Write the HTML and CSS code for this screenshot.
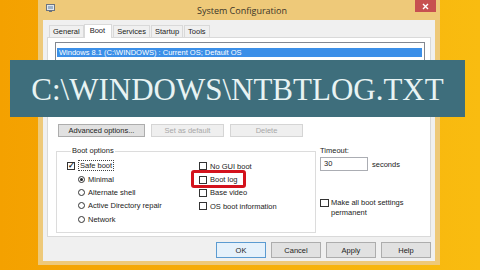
FILE: index.html
```html
<!DOCTYPE html>
<html lang="en">
<head>
    <meta charset="UTF-8">
    <title>System Configuration</title>
    <link rel="stylesheet" href="styles.css">
</head>
<body>
    <div class="window">
        <div class="titlebar">
            <svg class="app-icon" width="9" height="8" viewBox="0 0 9 8">
                <rect x="0.5" y="0.5" width="8" height="6" fill="#dfe6ee" stroke="#6b7480"/>
                <rect x="2" y="2" width="5" height="3" fill="#9fb3c8"/>
                <rect x="3" y="7" width="3" height="1" fill="#6b7480"/>
            </svg>
            <span class="title">System Configuration</span>
            <div class="close">
                <svg width="7" height="7" viewBox="0 0 7 7">
                    <path d="M1 1 L6 6 M6 1 L1 6" stroke="#fff" stroke-width="1.4"/>
                </svg>
            </div>
        </div>

        <div class="client">
            <div class="tabs">
                <span class="tab">General</span>
                <span class="tab active">Boot</span>
                <span class="tab">Services</span>
                <span class="tab">Startup</span>
                <span class="tab">Tools</span>
            </div>

            <div class="panel">
                <div class="listbox">
                    <div class="list-item selected">Windows 8.1 (C:\WINDOWS) : Current OS; Default OS</div>
                </div>

                <div class="button-row">
                    <span class="btn btn-wide">Advanced options...</span>
                    <span class="btn disabled">Set as default</span>
                    <span class="btn disabled">Delete</span>
                </div>

                <div class="lower">
                    <fieldset class="group">
                        <legend>Boot options</legend>
                        <div class="group-cols">
                            <div class="col">
                                <div class="row">
                                    <span class="check checked">&#10003;</span>
                                    <span class="focus">Safe boot</span>
                                </div>
                                <div class="row sub">
                                    <span class="radio on"></span>
                                    <span>Minimal</span>
                                </div>
                                <div class="row sub">
                                    <span class="radio"></span>
                                    <span>Alternate shell</span>
                                </div>
                                <div class="row sub">
                                    <span class="radio"></span>
                                    <span>Active Directory repair</span>
                                </div>
                                <div class="row sub">
                                    <span class="radio"></span>
                                    <span>Network</span>
                                </div>
                            </div>
                            <div class="col col-right">
                                <div class="row">
                                    <span class="check"></span>
                                    <span>No GUI boot</span>
                                </div>
                                <div class="row marked">
                                    <span class="check"></span>
                                    <span>Boot log</span>
                                    <span class="highlight"></span>
                                </div>
                                <div class="row">
                                    <span class="check"></span>
                                    <span>Base video</span>
                                </div>
                                <div class="row">
                                    <span class="check"></span>
                                    <span>OS boot information</span>
                                </div>
                            </div>
                        </div>
                    </fieldset>

                    <div class="side">
                        <div class="side-label">Timeout:</div>
                        <div class="timeout">
                            <span class="textbox">30</span>
                            <span>seconds</span>
                        </div>
                        <div class="permanent">
                            <span class="check"></span>
                            <span>Make all boot settings<br>permanent</span>
                        </div>
                    </div>
                </div>
            </div>

            <div class="footer">
                <span class="btn btn-foot default">OK</span>
                <span class="btn btn-foot">Cancel</span>
                <span class="btn btn-foot">Apply</span>
                <span class="btn btn-foot">Help</span>
            </div>
        </div>
    </div>

    <!-- Banner -->
    <div class="banner">C:\WINDOWS\NTBTLOG.TXT</div>
</body>
</html>
```

FILE: styles.css
```css
* {
    box-sizing: border-box;
    margin: 0;
    padding: 0;
}

body {
    width: 480px;
    height: 270px;
    overflow: hidden;
    position: relative;
    font-family: 'Liberation Sans', Arial, sans-serif;
    font-size: 7.5px;
    color: #222;
    background: linear-gradient(90deg, #f4a100 0%, #f6ab08 40%, #f9bc10 100%);
}

/* Window frame */
.window {
    margin-left: 38px;
    width: 402px;
    height: 265px;
    background: #eec979;
    display: flex;
    flex-direction: column;
    padding: 0 5px 4px;
}

.titlebar {
    height: 20px;
    margin: 0 -5px;
    padding: 0 4px 0 8px;
    display: grid;
    grid-template-columns: 1fr auto 1fr;
    align-items: center;
}

.app-icon {
    margin-top: -4px;
}

.title {
    font-family: 'Open Sans', sans-serif;
    font-size: 9px;
    color: #3a3428;
    padding-left: 2px;
}

.close {
    justify-self: end;
    align-self: start;
    width: 21px;
    height: 12px;
    background: #c75050;
    display: flex;
    align-items: center;
    justify-content: center;
}

/* Client area */
.client {
    flex: 1;
    background: #f0f0f0;
    padding: 5px 4px 3px;
    display: flex;
    flex-direction: column;
}

.tabs {
    display: flex;
    align-items: flex-end;
    height: 12px;
    padding-left: 2px;
}

.tab {
    height: 12px;
    padding: 0 3px;
    line-height: 11px;
    border: 1px solid #d9d9d9;
    border-bottom: none;
    background: #f0f0f0;
    margin-right: 1px;
}

.tab.active {
    height: 14px;
    line-height: 12px;
    background: #fff;
    padding: 0 6px 0 5px;
    margin: 0 1px 0 -1px;
    position: relative;
    top: 1px;
}

.panel {
    background: #fff;
    border: 1px solid #d9d9d9;
    height: 200px;
    padding: 4px 5px 4px 7px;
    display: flex;
    flex-direction: column;
}

.listbox {
    height: 72px;
    border: 1px solid #828790;
    padding: 5px 2px 0 1px;
}

.list-item.selected {
    background: #3b8fe8;
    color: #fff;
    height: 9px;
    line-height: 9px;
    padding-left: 2px;
}

/* Buttons */
.button-row {
    display: flex;
    gap: 6px;
    margin-top: 10px;
    padding-left: 3px;
}

.btn {
    display: flex;
    align-items: center;
    justify-content: center;
    height: 13px;
    width: 73px;
    background: #e1e1e1;
    border: 1px solid #adadad;
}

.btn-wide {
    width: 87px;
}

.btn.disabled {
    background: #efefef;
    border-color: #d5d5d5;
    color: #a8a8a8;
}

/* Boot options */
.lower {
    display: flex;
    gap: 4px;
    margin-top: 9px;
    flex: 1;
}

.group {
    width: 260px;
    min-width: 0;
    margin-left: 1px;
    margin-bottom: -1px;
    border: 1px solid #dcdcdc;
    padding: 0 0 0 10px;
}

.group legend {
    margin-left: 4px;
    padding: 0 1px;
    line-height: 10px;
}

.group-cols {
    display: flex;
    padding-top: 3px;
}

.col {
    width: 132px;
}

.col-right {
    flex: 1;
    min-width: 0;
    margin-top: 0.5px;
}

.row {
    display: flex;
    align-items: center;
    gap: 3px;
    height: 13.4px;
    position: relative;
}

.row.sub {
    padding-left: 11px;
}

.check {
    width: 8px;
    height: 8px;
    border: 1px solid #333;
    background: #fff;
    font-size: 8px;
    line-height: 6px;
    text-align: center;
    flex: none;
}

.check.checked {
    font-weight: bold;
}

.radio {
    width: 7px;
    height: 7px;
    border: 1px solid #333;
    border-radius: 50%;
    background: #fff;
    flex: none;
    position: relative;
}

.radio.on::after {
    content: "";
    position: absolute;
    left: 1px;
    top: 1px;
    width: 3px;
    height: 3px;
    border-radius: 50%;
    background: #222;
}

.focus {
    border: 1px dotted #444;
    padding: 0 1px;
    line-height: 9px;
}

.highlight {
    position: absolute;
    left: -8px;
    top: -3px;
    width: 55px;
    height: 18px;
    border: 3px solid #d3121c;
    border-radius: 3px;
}

.side {
    padding-top: 1px;
}

.side-label {
    line-height: 8px;
}

.timeout {
    display: flex;
    align-items: center;
    gap: 4px;
    margin-top: 2px;
}

.textbox {
    width: 48px;
    height: 14px;
    border: 1px solid #abadb3;
    background: #fff;
    line-height: 12px;
    padding-left: 3px;
}

.permanent {
    display: flex;
    gap: 2px;
    margin-top: 27px;
    line-height: 9.5px;
}

.permanent .check {
    margin-top: 1px;
    width: 9px;
}

/* Footer */
.footer {
    display: flex;
    justify-content: flex-end;
    gap: 5px;
    margin-top: 5px;
}

.btn-foot {
    width: 50px;
    height: 16px;
}

.btn-foot.default {
    background: #e5f1fb;
    border-color: #5b9bd1;
}

/* Banner */
.banner {
    position: absolute;
    left: 10px;
    top: 60px;
    width: 455px;
    height: 57px;
    background: #3e6e7c;
    color: #e8f3f3;
    font-family: 'Liberation Serif', 'Times New Roman', serif;
    font-size: 31px;
    display: flex;
    align-items: center;
    justify-content: center;
    padding-top: 2px;
}
```
